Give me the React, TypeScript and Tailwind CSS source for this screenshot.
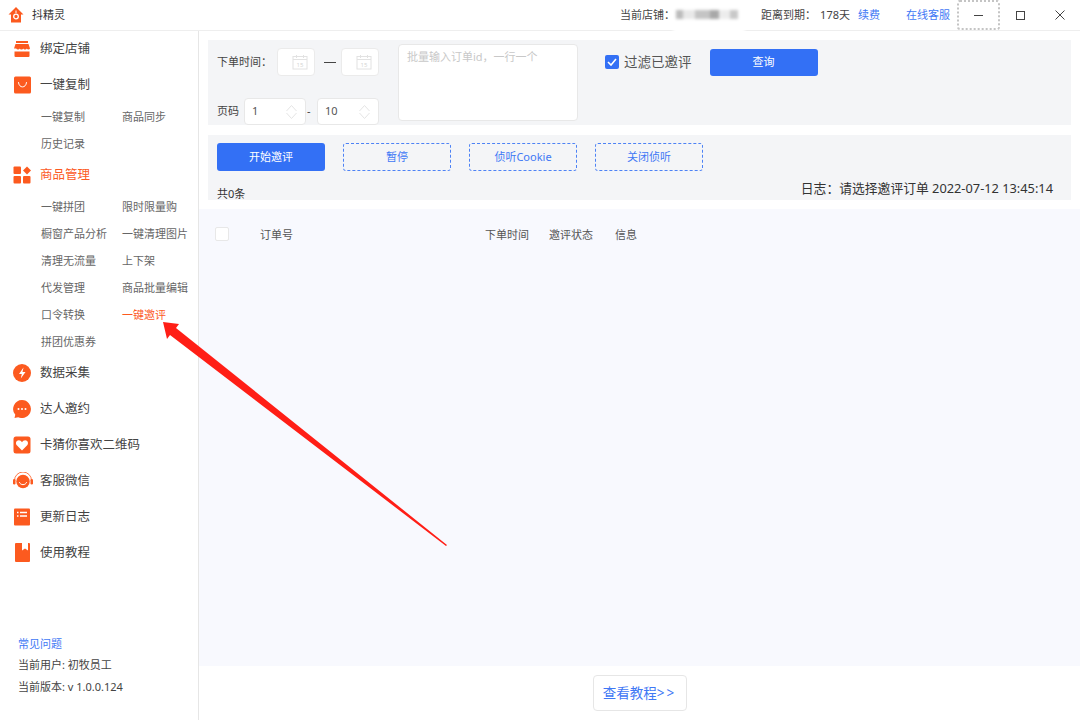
import React from 'react'

const font = { fontFamily: '"Noto Sans", "Noto Sans CJK SC", sans-serif' }

const orange = '#fc5a1f'

const ShopIcon = () => (
  <svg width="18" height="18" viewBox="0 0 18 18">
    <path d="M3 1h12v2H3z" fill={orange} />
    <path d="M2.5 4h13L17 8.5c-.6 1.4-2.600 1.400-3.200 0-.6 1.400-3 1.400-3.500 0-.6 1.400-3 1.400-3.600 0-.6 1.400-2.900 1.400-3.500 0L1 8.500z" fill={orange} />
    <path d="M1.500 11.500h15V16a1 1 0 0 1-1 1h-13a1 1 0 0 1-1-1z" fill={orange} />
  </svg>
)

const SmileIcon = () => (
  <svg width="18" height="18" viewBox="0 0 18 18">
    <rect x="1" y="0.500" width="17" height="17" rx="1.500" fill={orange} />
    <path d="M5.500 6.500c.4 6 7.600 6 8 0" fill="none" stroke="#fff" strokeWidth="1" strokeLinecap="round" />
  </svg>
)

const GridIcon = () => (
  <svg width="18" height="18" viewBox="0 0 18 18">
    <rect x="0.500" y="0.500" width="7.500" height="7.500" rx="1" fill={orange} />
    <path d="M14 .500l4 4-4 4-4-4z" fill={orange} />
    <rect x="0.500" y="10" width="7.500" height="7.500" rx="1" fill={orange} />
    <rect x="10" y="10" width="7.500" height="7.500" rx="1" fill={orange} />
  </svg>
)

const BoltIcon = () => (
  <svg width="18" height="18" viewBox="0 0 18 18">
    <circle cx="9" cy="9" r="9" fill={orange} />
    <path d="M10.500 3.500 6 10h2.800l-1 4.500L12.500 8H9.500z" fill="#fff" />
  </svg>
)

const ChatIcon = () => (
  <svg width="18" height="18" viewBox="0 0 18 18">
    <path d="M9 0a9 9 0 1 1-3.800 17.200L1.500 18l.8-3.200A9 9 0 0 1 9 0z" fill={orange} />
    <circle cx="5.500" cy="9" r="1" fill="#fff" />
    <circle cx="9" cy="9" r="1" fill="#fff" />
    <circle cx="12.500" cy="9" r="1" fill="#fff" />
  </svg>
)

const HeartIcon = () => (
  <svg width="18" height="18" viewBox="0 0 18 18">
    <rect x="0.500" y="0.500" width="17" height="17" rx="2.500" fill={orange} />
    <path d="M9 14.500 3.800 9.300C2 7.200 3.400 4.300 5.800 4.300c1.400 0 2.500.8 3.200 1.900.7-1.100 1.800-1.900 3.200-1.900 2.400 0 3.800 2.900 2 5z" fill="#fff" />
  </svg>
)

const HeadsetIcon = () => (
  <svg width="20" height="18" viewBox="0 0 20 18">
    <path d="M1.500 8.500a8.500 8.500 0 0 1 17 0" fill="none" stroke={orange} strokeWidth="0.800" />
    <circle cx="10" cy="9.500" r="6.700" fill={orange} />
    <rect x="0" y="7" width="2.500" height="5.500" rx="1.200" fill={orange} />
    <rect x="17.500" y="7" width="2.500" height="5.500" rx="1.200" fill={orange} />
    <path d="M6.500 10.500c.8 3 6.200 3 7 0" fill="none" stroke="#fff" strokeWidth="1" strokeLinecap="round" />
  </svg>
)

const ListIcon = () => (
  <svg width="18" height="18" viewBox="0 0 18 18">
    <rect x="1" y="0.500" width="16" height="17" rx="1" fill={orange} />
    <path d="M4 4.500h1.500M7 4.500h7M4 8h1.500M7 8h7" stroke="#fff" strokeWidth="1.300" />
  </svg>
)

const BookIcon = () => (
  <svg width="18" height="20" viewBox="0 0 18 20">
    <rect x="2" y="0" width="15" height="19" rx="1" fill={orange} />
    <path d="M9 0h6v7.500l-3-2-3 2z" fill="#fff" />
  </svg>
)

const HomeLogo = () => (
  <svg width="16" height="18" viewBox="0 0 16 18">
    <path d="M8 1 0.500 8.500h2.500V16.500h10V8.500h2.500z" fill={orange} />
    <path d="M8 4.500v2.500" stroke="#fff" strokeWidth="1" />
    <circle cx="8" cy="10.500" r="2.300" fill="none" stroke="#fff" strokeWidth="1.300" />
  </svg>
)

const CalendarIcon = () => (
  <svg width="16" height="16" viewBox="0 0 16 16" fill="none">
    <rect x="1" y="2.500" width="14" height="12.500" stroke="#e2e2e2" />
    <path d="M1 5.500h14M4.500 1v3M11.500 1v3" stroke="#e2e2e2" />
    <text x="8" y="13" textAnchor="middle" fontSize="6" fill="#d5d5d5">15</text>
  </svg>
)

const Spinner = () => (
  <svg width="11" height="14" viewBox="0 0 11 14" fill="none" stroke="#e4e4e4">
    <path d="M.5 6 5.500.5 10.500 6M.5 8l5 5.500L10.500 8" />
  </svg>
)

const NavItem = ({ icon, label, active }: { icon: React.ReactNode; label: string; active?: boolean }) => (
  <div className="flex h-9 shrink-0 items-center">
    <div className="ml-[13px] flex w-[27px] items-center">{icon}</div>
    <span className={`text-[12.5px] ${active ? 'text-[#fc5a1f]' : 'text-[#444]'}`}>{label}</span>
  </div>
)

const SubNav = ({ items }: { items: string[] }) => (
  <div className="grid shrink-0 grid-cols-[81px_1fr] pl-[41px]">
    {items.map((item) => (
      <div
        key={item}
        className={`flex h-[27px] items-center whitespace-nowrap pt-[2px] text-[11px] ${
          item === '一键邀评' ? 'text-[#fc5a1f]' : 'text-[#666]'
        }`}
      >
        {item}
      </div>
    ))}
  </div>
)

const DashedButton = ({ label }: { label: string }) => (
  <button className="flex h-[28px] w-[108px] items-center justify-center rounded-[3px] border border-dashed border-[#4d82f5] text-[11px] text-[#3f78f5]">
    {label}
  </button>
)

const DateBox = () => (
  <div className="flex h-7 w-[38px] items-center justify-end rounded-[4px] border border-[#ebebeb] bg-white pr-[6px]">
    <CalendarIcon />
  </div>
)

const PageBox = ({ value }: { value: string }) => (
  <div className="flex h-[27px] w-[62px] items-center justify-between rounded-[4px] border border-[#e8e8e8] bg-white pl-[7px] pr-2 text-[11px] text-[#555]">
    {value}
    <Spinner />
  </div>
)

export default function App() {
  return (
    <div className="relative flex h-[720px] w-[1080px] flex-col overflow-hidden bg-white" style={font}>
      <header className="flex h-[31px] shrink-0 items-center border-b border-[#eeeeee] text-[11px] text-[#444]">
        <div className="ml-2 flex w-[24px] items-center">
          <HomeLogo />
        </div>
        <span className="text-[#333]">抖精灵</span>
        <div className="ml-auto flex h-full items-center">
          <span>当前店铺：</span>
          {/* store name is pixelated out in the screenshot */}
          <div className="relative z-10 ml-[-2px] mt-[5px] flex h-[28px] w-[72px] items-start self-start bg-white pl-[3px] pt-[5px] blur-[1.5px]">
            <div className="h-[9px] w-[7px] bg-[#bbb]" />
            <div className="h-[9px] w-[12px] bg-[#e8e8e8]" />
            <div className="h-[9px] w-[15px] bg-[#c4c4c4]" />
            <div className="h-[9px] w-[9px] bg-[#a8a8a8]" />
            <div className="h-[9px] w-[11px] bg-[#ececec]" />
            <div className="h-[9px] w-[8px] bg-[#c8c8c8]" />
          </div>
          <span className="ml-[16px]">距离到期：</span>
          <span className="ml-[4px]">178天</span>
          <span className="ml-2 text-[#3f78f5]">续费</span>
          <span className="ml-[26px] text-[#3f78f5]">在线客服</span>
          <div className="ml-[7px] flex h-[30px] w-[43px] items-center justify-center rounded-[3px] border-2 border-dotted border-[#c4c4c4]">
            <div className="h-px w-[9px] bg-[#444]" />
          </div>
          <div className="flex w-[40px] items-center justify-center">
            <div className="h-[9px] w-[9px] border border-[#444]" />
          </div>
          <div className="flex w-[40px] items-center justify-center">
            <svg width="10" height="10" viewBox="0 0 10 10" stroke="#444" strokeWidth="1">
              <path d="M.5.500l9 9M9.500.500l-9 9" />
            </svg>
          </div>
        </div>
      </header>

      <div className="flex min-h-0 flex-1">
        <aside className="flex w-[199px] shrink-0 flex-col border-r border-[#e6e6e6]">
          <NavItem icon={<ShopIcon />} label="绑定店铺" />
          <NavItem icon={<SmileIcon />} label="一键复制" />
          <SubNav items={['一键复制', '商品同步', '历史记录']} />
          <NavItem icon={<GridIcon />} label="商品管理" active />
          <SubNav
            items={[
              '一键拼团',
              '限时限量购',
              '橱窗产品分析',
              '一键清理图片',
              '清理无流量',
              '上下架',
              '代发管理',
              '商品批量编辑',
              '口令转换',
              '一键邀评',
              '拼团优惠券',
            ]}
          />
          <NavItem icon={<BoltIcon />} label="数据采集" />
          <NavItem icon={<ChatIcon />} label="达人邀约" />
          <NavItem icon={<HeartIcon />} label="卡猜你喜欢二维码" />
          <NavItem icon={<HeadsetIcon />} label="客服微信" />
          <NavItem icon={<ListIcon />} label="更新日志" />
          <NavItem icon={<BookIcon />} label="使用教程" />
          <div className="mt-auto flex flex-col pb-[25px] pl-[18px] text-[11px] text-[#444]">
            <span className="text-[#3f78f5]">常见问题</span>
            <span className="mt-[5px]">当前用户: 初牧员工</span>
            <span className="mt-[5px]">当前版本: v 1.0.0.124</span>
          </div>
        </aside>

        <main className="flex min-w-0 flex-1 flex-col pt-[9px]">
          <section className="ml-[9px] mr-[9px] flex h-[85px] shrink-0 overflow-hidden bg-[#f4f5f7] pl-[9px] pt-[4px]">
            <div className="flex w-[162px] shrink-0 flex-col pt-[4px]">
              <div className="flex items-center">
                <span className="w-[60px] text-[11px] text-[#444]">下单时间：</span>
                <DateBox />
                <div className="ml-[9px] mr-[5px] h-px w-[12px] bg-[#444]" />
                <DateBox />
              </div>
              <div className="mt-[22px] flex items-center text-[11px] text-[#444]">
                <span className="w-[27px]">页码</span>
                <PageBox value="1" />
                <span className="w-[11px] pl-px">-</span>
                <PageBox value="10" />
              </div>
            </div>
            <div className="ml-[19px] h-[77px] w-[180px] shrink-0 rounded-[4px] border border-[#e8e8e8] bg-white px-2 py-[4px] text-[11px] text-[#c8c8c8]">
              批量输入订单id，一行一个
            </div>
            <div className="ml-[27px] flex h-[32px] shrink-0 items-center self-start pt-[4px]">
              <div className="flex h-[14px] w-[14px] items-center justify-center rounded-[2px] bg-[#3370f5]">
                <svg width="10" height="8" viewBox="0 0 10 8" fill="none" stroke="#fff" strokeWidth="1.600">
                  <path d="M1 4l3 3 5-6" />
                </svg>
              </div>
              <span className="ml-[5px] text-[13.5px] text-[#555]">过滤已邀评</span>
            </div>
            <button className="ml-[18px] mt-[5px] flex h-[27px] w-[108px] items-center justify-center rounded-[3px] bg-[#3370f5] text-[11px] text-white">
              查询
            </button>
          </section>

          <section className="relative ml-[9px] mr-[9px] mt-[10px] h-[65px] shrink-0 overflow-hidden bg-[#f4f5f7] pl-[9px] pt-[8px]">
            <div className="flex gap-[18px]">
              <button className="flex h-[28px] w-[108px] items-center justify-center rounded-[3px] bg-[#3370f5] text-[11px] text-white">
                开始邀评
              </button>
              <DashedButton label="暂停" />
              <DashedButton label="侦听Cookie" />
              <DashedButton label="关闭侦听" />
            </div>
            <div className="flex items-start justify-between pr-[18px]">
              <span className="mt-[15px] text-[11px] text-[#333]">共0条</span>
              <span className="mt-[8px] text-[12.8px] text-[#333]">日志：请选择邀评订单 2022-07-12 13:45:14</span>
            </div>
          </section>

          <section className="mt-[9px] min-h-0 flex-1 bg-[#f8f9fe]">
            <div className="flex h-[50px] items-center pl-[16px] text-[11px] text-[#555]">
              <div className="h-[14px] w-[14px] rounded-[2px] border border-[#e8e8e8] bg-white" />
              <span className="ml-[31px] mt-[2px] w-[225px]">订单号</span>
              <span className="mt-[2px] w-[64px]">下单时间</span>
              <span className="mt-[2px] w-[66px]">邀评状态</span>
              <span className="mt-[2px]">信息</span>
            </div>
          </section>

          <div className="flex h-[54px] shrink-0 items-center justify-center">
            <button className="flex h-[36px] w-[94px] items-center justify-center rounded-[4px] border border-[#e6e6e6] text-[13.5px] text-[#3f78f5]">
              查看教程<span className="tracking-[2px]">&gt;&gt;</span>
            </button>
          </div>
        </main>
      </div>

      {/* red annotation arrow drawn over the screenshot */}
      <svg className="pointer-events-none absolute left-0 top-0" width="1080" height="720" viewBox="0 0 1080 720">
        <path d="M163 322 179 324 176 328 447 545 446 546 170 335 167 339z" fill="#ff1e16" />
      </svg>
    </div>
  )
}
